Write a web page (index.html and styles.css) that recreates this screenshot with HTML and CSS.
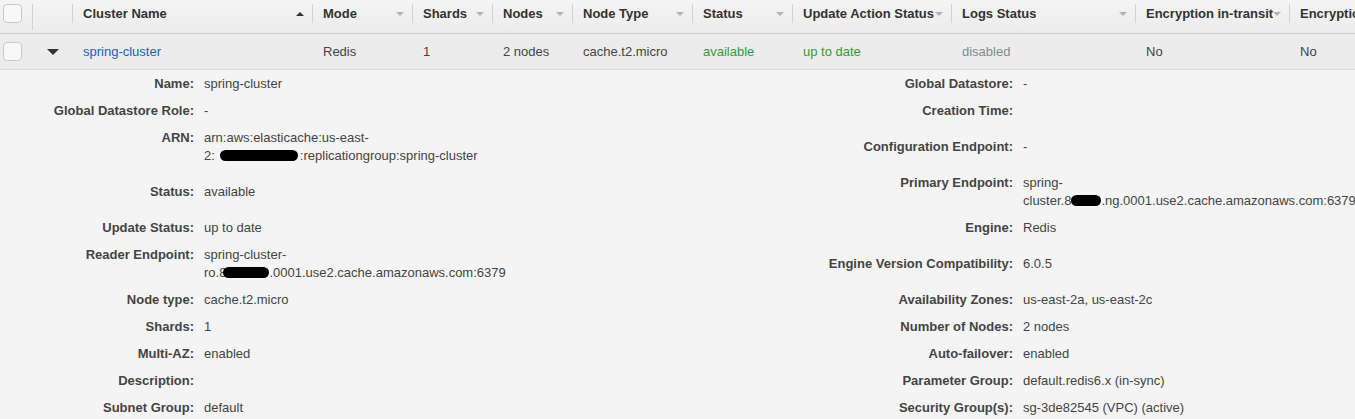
FILE: index.html
```html
<!DOCTYPE html>
<html lang="en">
<head>
<meta charset="utf-8">
<title>ElastiCache Redis clusters</title>
<link rel="stylesheet" href="styles.css">
</head>
<body>
<div class="viewport">
  <div class="grid-table">
    <div class="cols head">
      <div class="hcell first"><span class="checkbox"></span></div>
      <div class="hcell sep tall"></div>
      <div class="hcell sep"><span class="htext">Cluster Name</span><span class="arrow up"></span></div>
      <div class="hcell sep"><span class="htext">Mode</span><span class="arrow"></span></div>
      <div class="hcell sep"><span class="htext">Shards</span><span class="arrow"></span></div>
      <div class="hcell sep"><span class="htext">Nodes</span><span class="arrow"></span></div>
      <div class="hcell sep"><span class="htext">Node Type</span><span class="arrow"></span></div>
      <div class="hcell sep"><span class="htext">Status</span><span class="arrow"></span></div>
      <div class="hcell sep"><span class="htext">Update Action Status</span><span class="arrow"></span></div>
      <div class="hcell sep"><span class="htext">Logs Status</span><span class="arrow"></span></div>
      <div class="hcell sep"><span class="htext">Encryption in-transit</span><span class="arrow"></span></div>
      <div class="hcell sep"><span class="htext">Encryption at-rest</span><span class="arrow"></span></div>
    </div>

    <div class="cols row">
      <div class="cell first"><span class="checkbox"></span></div>
      <div class="cell expander"><span class="caret"></span></div>
      <div class="cell"><a class="link" href="#">spring-cluster</a></div>
      <div class="cell">Redis</div>
      <div class="cell">1</div>
      <div class="cell">2 nodes</div>
      <div class="cell">cache.t2.micro</div>
      <div class="cell ok">available</div>
      <div class="cell ok">up to date</div>
      <div class="cell muted">disabled</div>
      <div class="cell">No</div>
      <div class="cell">No</div>
    </div>

    <div class="details">
      <div class="drow">
        <div class="pair"><span class="label">Name:</span><span class="value">spring-cluster</span></div>
        <div class="pair"><span class="label">Global Datastore:</span><span class="value">-</span></div>
      </div>
      <div class="drow">
        <div class="pair"><span class="label">Global Datastore Role:</span><span class="value">-</span></div>
        <div class="pair"><span class="label">Creation Time:</span><span class="value"></span></div>
      </div>
      <div class="drow">
        <div class="pair"><span class="label">ARN:</span><span class="value">arn:aws:elasticache:us-east-<br>2:<span class="redact arn"></span>:replicationgroup:spring-cluster</span></div>
        <div class="pair"><span class="label">Configuration Endpoint:</span><span class="value">-</span></div>
      </div>
      <div class="drow">
        <div class="pair"><span class="label">Status:</span><span class="value">available</span></div>
        <div class="pair"><span class="label">Primary Endpoint:</span><span class="value">spring-<br>cluster.8<span class="redact primary"></span>.ng.0001.use2.cache.amazonaws.com:6379</span></div>
      </div>
      <div class="drow">
        <div class="pair"><span class="label">Update Status:</span><span class="value">up to date</span></div>
        <div class="pair"><span class="label">Engine:</span><span class="value">Redis</span></div>
      </div>
      <div class="drow">
        <div class="pair"><span class="label">Reader Endpoint:</span><span class="value">spring-cluster-<br>ro.8<span class="redact reader"></span>.0001.use2.cache.amazonaws.com:6379</span></div>
        <div class="pair"><span class="label">Engine Version Compatibility:</span><span class="value">6.0.5</span></div>
      </div>
      <div class="drow">
        <div class="pair"><span class="label">Node type:</span><span class="value">cache.t2.micro</span></div>
        <div class="pair"><span class="label">Availability Zones:</span><span class="value">us-east-2a, us-east-2c</span></div>
      </div>
      <div class="drow">
        <div class="pair"><span class="label">Shards:</span><span class="value">1</span></div>
        <div class="pair"><span class="label">Number of Nodes:</span><span class="value">2 nodes</span></div>
      </div>
      <div class="drow">
        <div class="pair"><span class="label">Multi-AZ:</span><span class="value">enabled</span></div>
        <div class="pair"><span class="label">Auto-failover:</span><span class="value">enabled</span></div>
      </div>
      <div class="drow">
        <div class="pair"><span class="label">Description:</span><span class="value"></span></div>
        <div class="pair"><span class="label">Parameter Group:</span><span class="value">default.redis6.x (in-sync)</span></div>
      </div>
      <div class="drow">
        <div class="pair"><span class="label">Subnet Group:</span><span class="value">default</span></div>
        <div class="pair"><span class="label">Security Group(s):</span><span class="value">sg-3de82545 (VPC) (active)</span></div>
      </div>
    </div>
  </div>
</div>
</body>
</html>
```

FILE: styles.css
```css
html, body {
  margin: 0;
  padding: 0;
  overflow: hidden;
  background: #f4f4f4;
}

body {
  font-family: "Liberation Sans", Arial, Helvetica, sans-serif;
  font-size: 13px;
  color: #444;
}

.viewport {
  width: 1355px;
  overflow: hidden;
}

.grid-table {
  width: 1640px;
}

.cols {
  display: grid;
  grid-template-columns: 32px 40px 240px 100px 80px 80px 120px 100px 159px 184px 154px 351px;
}

/* header */
.head {
  background: linear-gradient(#f4f4f4, #ececec);
  border-bottom: 1px solid #cbcbcb;
  align-items: start;
  padding-top: 4px;
  box-sizing: border-box;
  height: 34px;
}

.hcell {
  display: flex;
  align-items: center;
  height: 19px;
  padding: 0 8px 0 10px;
  color: #333;
  font-weight: bold;
  white-space: nowrap;
  overflow: hidden;
}

.hcell.first {
  padding: 0 0 0 3px;
}

.hcell.sep {
  border-left: 1px solid #d2d2d2;
}

.hcell.tall {
  height: 26px;
}

.htext {
  flex: 0 1 auto;
  overflow: hidden;
}

.arrow {
  margin-left: auto;
  flex: 0 0 auto;
  width: 0;
  height: 0;
  border-left: 4px solid transparent;
  border-right: 4px solid transparent;
  border-top: 4px solid #b4b4b4;
}

.arrow.up {
  border-top: 0;
  border-bottom: 4px solid #333;
}

.checkbox {
  display: block;
  width: 17px;
  height: 17px;
  border: 1px solid #c8c8c8;
  border-radius: 4px;
  background: #f8f8f8;
}

/* data row */
.row {
  height: 36px;
  box-sizing: border-box;
  background: #ececec;
  border-bottom: 1px solid #dadada;
  align-items: center;
}

.cell {
  padding-left: 11px;
  white-space: nowrap;
}

.cell.first {
  padding-left: 3px;
}

.cell.expander {
  padding-left: 15px;
  display: flex;
  align-items: center;
}

.caret {
  display: block;
  width: 0;
  height: 0;
  border-left: 6px solid transparent;
  border-right: 6px solid transparent;
  border-top: 6px solid #333;
}

.link {
  color: #1166bb;
  text-decoration: none;
}

.ok {
  color: #2f9e34;
}

.muted {
  color: #888;
}

/* details */
.details {
  background: #f4f4f4;
}

.drow {
  display: grid;
  grid-template-columns: 819px 819px;
  align-items: center;
  padding: 5px 0 4px;
  min-height: 18px;
}

.pair {
  display: flex;
  align-items: flex-start;
  line-height: 18px;
}

.label {
  width: 194px;
  flex: 0 0 194px;
  text-align: right;
  font-weight: bold;
  color: #444;
  white-space: nowrap;
}

.value {
  padding-left: 10px;
  white-space: nowrap;
  color: #444;
}

.redact {
  display: inline-block;
  height: 11px;
  background: #000;
  border-radius: 6px;
  vertical-align: -1px;
}

.redact.arn {
  width: 78px;
  margin: 0 2px 0 5px;
}

.redact.reader {
  width: 46px;
  margin-left: -3px;
}

.redact.primary {
  width: 30px;
}
```
